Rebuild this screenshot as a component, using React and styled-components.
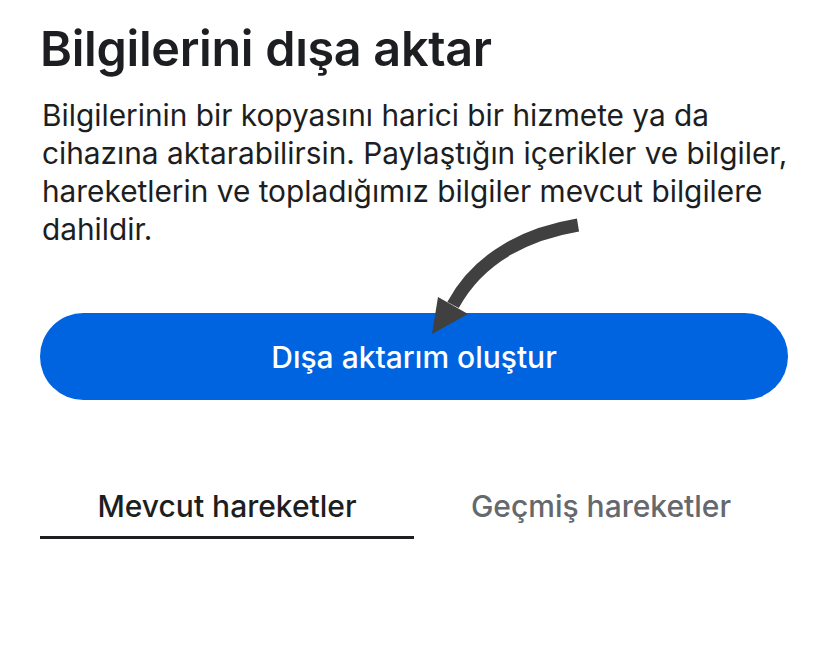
import React from 'react';
import styled, { createGlobalStyle } from 'styled-components';

const Global = createGlobalStyle`
  html, body {
    margin: 0;
    padding: 0;
    background: #ffffff;
  }
  body {
    font-family: Inter, "Noto Sans", sans-serif;
    color: #1c1e21;
  }
`;

const Page = styled.div`
  position: relative;
  width: 828px;
  height: 652px;
  padding: 21px 40px 0 40px;
  box-sizing: border-box;
`;

const Title = styled.h1`
  margin: 0;
  font-size: 48.5px;
  font-weight: 600;
  line-height: 56px;
  letter-spacing: -0.3px;
  color: #1c1e21;
`;

const Description = styled.p`
  margin: 19px -10px 0 2px;
  font-size: 29.8px;
  line-height: 38px;
  font-weight: 400;
  color: #1c1e21;
`;

const PrimaryButton = styled.button`
  display: flex;
  align-items: center;
  justify-content: center;
  width: 100%;
  height: 87px;
  margin-top: 65px;
  border: none;
  border-radius: 44px;
  background: #0064e0;
  color: #ffffff;
  font-family: inherit;
  font-size: 30px;
  font-weight: 500;
  cursor: pointer;
`;

const Tabs = styled.div`
  display: grid;
  grid-template-columns: 1fr 1fr;
  margin-top: 75px;
`;

const Tab = styled.div`
  display: flex;
  align-items: center;
  justify-content: center;
  height: 61px;
  font-size: 30px;
  font-weight: 500;
  color: ${({ active }) => (active ? '#1c1e21' : '#65686c')};
  border-bottom: 3px solid ${({ active }) => (active ? '#1c1e21' : 'transparent')};
`;

const Arrow = styled.svg`
  position: absolute;
  left: 420px;
  top: 215px;
  width: 170px;
  height: 125px;
  pointer-events: none;
`;

export default function App() {
  return (
    <>
      <Global />
      <Page>
        <Title>Bilgilerini dışa aktar</Title>
        <Description>
          Bilgilerinin bir kopyasını harici bir hizmete ya da cihazına aktarabilirsin. Paylaştığın içerikler ve bilgiler, hareketlerin ve topladığımız bilgiler mevcut bilgilere dahildir.
        </Description>
        <PrimaryButton>Dışa aktarım oluştur</PrimaryButton>
        <Tabs>
          <Tab active>Mevcut hareketler</Tab>
          <Tab>Geçmiş hareketler</Tab>
        </Tabs>
        <Arrow viewBox="0 0 170 125">
          <path d="M158 10 C 110 18, 60 40, 33 90" fill="none" stroke="#404040" strokeWidth="13" />
          <polygon points="12,119 18,82 48,99" fill="#404040" />
        </Arrow>
      </Page>
    </>
  );
}
